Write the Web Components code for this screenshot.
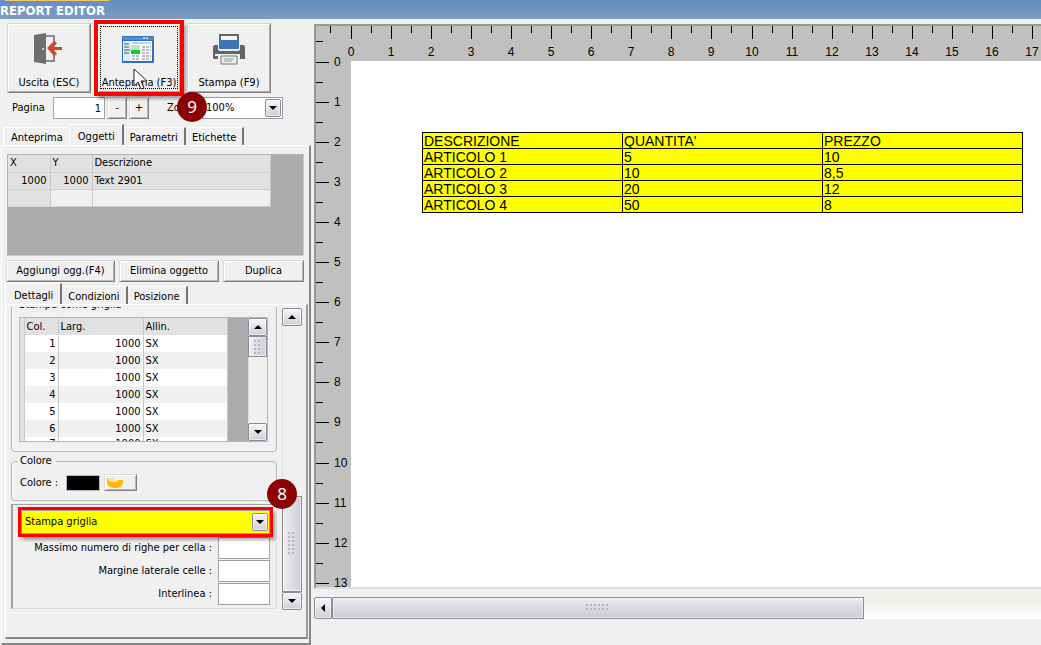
<!DOCTYPE html>
<html lang="it">
<head>
<meta charset="utf-8">
<title>Report editor</title>
<style>
  html, body { height: 100%; margin: 0; }
  body {
    background: #f0f0f0; color: #000; overflow: hidden;
    font: 11px/14px "DejaVu Sans Condensed", "DejaVu Sans", sans-serif;
  }
</style>
</head>
<body>
<report-editor></report-editor>
<script>
const reset = `
  *, *::before, *::after { box-sizing: border-box; }
  button, input, select { font: inherit; color: inherit; margin: 0; border-radius: 0; }
`;

function define(name, css, html, setup) {
  const template = document.createElement('template');
  template.innerHTML = `<style>${reset}${css}</style>${html}`;
  customElements.define(name, class extends HTMLElement {
    constructor() {
      super();
      this.attachShadow({ mode: 'open' }).append(template.content.cloneNode(true));
    }
    connectedCallback() { if (setup) setup(this, this.shadowRoot); }
  });
}

/* ---------- basic controls ---------- */

define('tool-button', `
  :host { display: block; position: relative; width: 84px; height: 70px; }
  button {
    width: 100%; height: 100%; padding: 8px 0 0; background: #f0f0f0;
    border: 1px solid; border-color: #d4d4d4 #808080 #808080 #d4d4d4;
    box-shadow: inset 1px 1px #fff, inset -1px -1px #a8a8a8;
    display: flex; flex-direction: column; align-items: center; gap: 10px;
    white-space: nowrap;
  }
  ::slotted(svg) { width: 36px; height: 34px; display: block; }
  :host([highlighted]) { outline: 4px solid #f00; outline-offset: -1px; box-shadow: 3px 4px 3px 2px #0005; }
  :host([highlighted]) button::after {
    content: ""; position: absolute; inset: 3px 3px 4px; border: 1px dotted #000;
  }
`, `<button type="button"><slot name="icon"></slot><span><slot></slot></span></button>`);

define('push-button', `
  :host { display: block; height: 22px; }
  button {
    width: 100%; height: 100%; padding: 0; background: #f0f0f0; white-space: nowrap;
    border: 1px solid; border-color: #dcdcdc #808080 #808080 #dcdcdc;
    box-shadow: inset 1px 1px #fff, inset -1px -1px #b8b8b8;
    display: flex; align-items: center; justify-content: center;
  }
`, `<button type="button"><slot></slot></button>`);

define('tab-item', `
  :host { display: block; }
  button {
    height: 18px; padding: 2px 6px 0 6px; background: #f0f0f0; border: 0;
    border-top: 1px solid #fff; border-right: 2px solid #777;
    display: block; white-space: nowrap;
  }
  :host([first]) button { padding-left: 7px; border-left: 1px solid #fff; border-right: 0; }
  :host([selected]) button { height: 21px; padding: 3px 7px 0 8px; border-left: 1px solid #fff; }
`, `<button type="button" role="tab"><slot></slot></button>`);

define('arrow-cap', `
  :host {
    display: flex; align-items: center; justify-content: center;
    width: 18px; height: 18px; border: 1px solid #8c8c94; border-radius: 2px;
    background: linear-gradient(#f6f6fa, #cfcfd8);
    box-shadow: inset 0 0 0 1px #ffffff90;
  }
  i { border: 4px solid transparent; border-bottom-width: 0; border-top: 4px solid #000; }
  :host([dir=up]) i { transform: rotate(180deg); }
  :host([dir=left]) i { transform: rotate(90deg); }
`, `<i></i>`);

define('combo-box', `
  :host { display: grid; height: 22px; }
  select, arrow-cap { grid-area: 1 / 1; }
  select {
    appearance: none; width: 100%; height: 100%; padding: 0 20px 0 3px;
    border: 1px solid #9a9aa2; background: var(--field, #fff); outline: 0;
  }
  arrow-cap { width: 16px; height: 18px; justify-self: end; align-self: center; margin-right: 2px; pointer-events: none; }
`, `<select><option></option></select><arrow-cap></arrow-cap>`, (host, root) => {
  root.querySelector('option').textContent = host.getAttribute('value');
  root.querySelector('select').setAttribute('aria-label', host.getAttribute('label'));
});

define('step-badge', `
  :host {
    position: absolute; display: flex; align-items: center; justify-content: center;
    width: 30px; height: 30px; border-radius: 50%; background: #8b0000; color: #fff;
    font: 17px/20px "Noto Sans", sans-serif; z-index: 3;
  }
`, `<slot></slot>`);

define('scroll-bar', `
  :host { display: flex; flex-direction: column; width: 20px; background: #f0f0ee; box-shadow: inset 1px 0 #dedee2; }
  :host([horizontal]) { flex-direction: row; width: auto; height: 22px; background: linear-gradient(#efede5, #fff); box-shadow: none; }
  arrow-cap { flex: none; width: 100%; height: 18px; }
  :host([horizontal]) arrow-cap { width: 18px; height: 100%; }
  .before { flex: var(--before, 0) 0 0; }
  .thumb {
    flex: var(--size, 1) 0 0; display: flex; align-items: center; justify-content: center;
    border: 1px solid #8c8c94; background: linear-gradient(90deg, #eeeef4, #cdcdd6);
    box-shadow: inset 0 0 0 1px #ffffff80;
  }
  :host([horizontal]) .thumb { background: linear-gradient(#ececf4, #dcdce4 40%, #ccccd4); }
  .after { flex: var(--after, 0) 0 0; }
  .grip {
    width: 8px; height: 24px; flex: none;
    background: radial-gradient(circle at 1px 1px, #b4b4bc 1px, transparent 1px) 0 0 / 4px 4px;
  }
  :host([horizontal]) .grip { width: 24px; height: 8px; }
  :host([short]) .grip { height: 14px; }
  :host([horizontal]) arrow-cap[dir=down] { display: none; }
`, `<arrow-cap dir="up"></arrow-cap><span class="before"></span><span class="thumb"><span class="grip"></span></span><span class="after"></span><arrow-cap dir="down"></arrow-cap>`,
(host, root) => {
  if (host.hasAttribute('horizontal')) root.querySelector('arrow-cap').setAttribute('dir', 'left');
});

/* ---------- tool area ---------- */

define('main-toolbar', `
  :host { display: block; padding: 4px 7px 0; position: relative; }
  .tools { display: flex; gap: 6px; }
  .pointer { position: absolute; left: 133px; top: 49px; width: 16px; height: 24px; z-index: 2; }
  .fields { display: flex; align-items: center; height: 22px; margin-top: 4px; padding-left: 5px; }
  label { white-space: nowrap; }
  .page { width: 41px; }
  input { width: 52px; height: 22px; border: 1px solid #a0a0a8; background: #fff; text-align: right; padding: 0 3px; outline: 0; }
  push-button { width: 20px; margin-left: 2px; }
  .zoom { margin-left: 18px; width: 35px; }
  combo-box { width: 81px; }
  step-badge { left: 177px; top: 73px; }
`, `
  <div class="tools">
    <tool-button>
      <svg slot="icon" viewBox="0 0 36 34" aria-hidden="true">
        <path d="M14 3h10v9h-2V5h-8zM22 22h2v8H14v-2h8z" fill="#8a8a8a"/>
        <path d="M3 3l12-2v31L3 30z" fill="#6e6e6e"/><circle cx="12" cy="17" r="1" fill="#eee"/>
        <path d="M31 15v3h-8l3 4-3 2-7-8 7-7 3 2-3 4z" fill="#d2452f"/>
      </svg>Uscita (ESC)
    </tool-button>
    <tool-button highlighted>
      <svg slot="icon" viewBox="0 0 36 34" aria-hidden="true">
        <rect x="1" y="4" width="32" height="27" rx="1" fill="#2d6fc0"/>
        <rect x="2" y="5" width="30" height="3" fill="#4b90e0"/>
        <path d="M22 5h2v2h-2zM25 5h2v2h-2z" fill="#b5d4f8"/><path d="M28 5h3v2h-3z" fill="#e0533a"/>
        <rect x="2" y="9" width="8" height="20" fill="#e4ecf8"/><rect x="10" y="9" width="21" height="20" fill="#fff"/>
        <path d="M3 12h5M3 15h5M3 18h6M3 21h5" stroke="#456" />
        <path d="M11 11h19" stroke="#c3d2ea" stroke-width="2"/>
        <rect x="10" y="13" width="9" height="9" fill="#16c92c"/><rect x="10" y="13" width="9" height="5" fill="#b4ecc0"/>
        <path d="M21 15h9M21 18h9M21 21h8M11 24h8M21 24h9M11 27h7M21 27h8" stroke="#778" stroke-dasharray="3 1"/>
      </svg>Anteprima (F3)
    </tool-button>
    <tool-button>
      <svg slot="icon" viewBox="0 0 36 34" aria-hidden="true">
        <rect x="9" y="3" width="18" height="10" fill="#f4f4f4" stroke="#666" stroke-width="2"/>
        <path d="M4 13h28q2 0 2 2v12h-5v-5H7v5H3q-1 0-1-1V15q0-2 2-2z" fill="#636466"/>
        <path d="M7 9h22v8q0 2-2 2H9q-2 0-2-2z" fill="#f0f0f0"/>
        <path d="M8 8h20v8q0 1-1 1H9q-1 0-1-1z" fill="#3c74b4"/>
        <path d="M10 24h16v8H10z" fill="#ececec" stroke="#777"/>
        <path d="M13 27h10M13 29h8" stroke="#999"/><rect x="4" y="22" width="3" height="2" fill="#eee"/>
      </svg>Stampa (F9)
    </tool-button>
  </div>
  <svg class="pointer" viewBox="0 0 16 24" aria-hidden="true">
    <path d="M1 1v17l4-4 3 7 3-1-3-7h6z" fill="#fff" stroke="#222"/>
  </svg>
  <div class="fields">
    <label class="page" for="page">Pagina</label><input id="page" value="1">
    <push-button>-</push-button><push-button>+</push-button>
    <span class="zoom">Zoom</span><combo-box value="100%" label="Zoom"></combo-box>
  </div>
  <step-badge>9</step-badge>
`);

define('object-grid', `
  :host { display: block; height: 102px; background: #ababab; border: 1px solid #c8c8d0; border-top-color: #b4b4b4; border-left-color: #b4b4b4; }
  table { border-collapse: collapse; table-layout: fixed; width: 263px; }
  th, td { height: 17px; padding: 0 2px; font-weight: normal; text-align: left; border-right: 1px solid #c8c8cc; border-bottom: 1px solid #d0d0d4; background: #e1e1e1; }
  th { border-bottom-color: #cfcfd6; }
  td.n { text-align: right; padding-right: 3px; }
  .empty td + td { background: #f0f0f0; }
`, `<table>
  <colgroup><col style="width:42px"><col style="width:42px"><col></colgroup>
  <thead><tr><th>X</th><th>Y</th><th>Descrizione</th></tr></thead>
  <tbody><tr><td class="n">1000</td><td class="n">1000</td><td>Text 2901</td></tr>
  <tr class="empty"><td></td><td></td><td></td></tr></tbody></table>`);

define('column-grid', `
  :host { display: flex; height: 125px; background: #ababab; border: 1px solid #b4b4bc; overflow: hidden; }
  .view { flex: 1; overflow: hidden; }
  table { border-collapse: collapse; table-layout: fixed; width: 208px; }
  th, td { height: 17px; padding: 0 2px; font-weight: normal; text-align: left; border-right: 1px solid #c8c8cc; background: #fff; }
  th { background: #e1e1e1; }
  tr:nth-child(even) td { background: #f0f0f0; }
  tr:last-child td { vertical-align: top; }
  td:first-child, th:first-child, tr:nth-child(even) td:first-child { padding: 0; background: #e1e1e1; }
  .n { text-align: right; }
  scroll-bar { width: 19px; --size: 20; --after: 68; }
`, `<div class="view"><table>
  <colgroup><col style="width:4px"><col style="width:34px"><col style="width:85px"><col></colgroup>
  <thead><tr><th></th><th>Col.</th><th>Larg.</th><th>Allin.</th></tr></thead><tbody></tbody></table></div>
  <scroll-bar short></scroll-bar>`, (host, root) => {
  root.querySelector('tbody').innerHTML = [1, 2, 3, 4, 5, 6, 7].map(n =>
    `<tr><td></td><td class="n">${n}</td><td class="n">1000</td><td>SX</td></tr>`).join('');
});

define('detail-form', `
  :host { display: flex; flex: 1; position: relative; padding: 2px 4px 27px 5px; }
  .view { width: 266px; overflow: hidden; }
  .content { margin-top: -9px; }
  fieldset { margin: 0; border: 1px solid #b4b4b4; border-radius: 4px; min-width: 0; box-shadow: inset 1px 0 #fff, inset 0 -1px #fff; }
  legend { padding: 0 4px 0 2px; margin-left: -2px; height: 14px; }
  .grid { padding: 5px 8px 9px 7px; }
  .colour { margin-top: 2px; padding: 6px 8px 9px; display: flex; }
  .line { display: flex; align-items: center; }
  .swatch { width: 34px; height: 16px; background: #000; border: 1px solid #b8b8c8; margin: 0 4px 0 8px; padding: 0; }
  push-button { width: 33px; height: 17px; }
  .folder { width: 20px; height: 13px; margin-right: 10px; }
  .options { margin-top: 3px; padding: 5px 6px 3px 8px; border: 1px solid #dcdcdc; border-left: 2px solid #a0a0a0; border-top-color: #a0a0a0; }
  combo-box { height: 24px; --field: #ff0; outline: 3px solid #f00; box-shadow: 3px 4px 3px 2px #0005; position: relative; z-index: 1; }
  .field { display: flex; align-items: center; justify-content: flex-end; gap: 6px; height: 22px; margin-top: 1px; }
  .first { margin-top: 3px; }
  input { width: 52px; height: 22px; border: 1px solid #a0a0a8; background: #fff; outline: 0; }
  .outer { width: 20px; margin: 1px 0 0 5px; --before: 171; --size: 94; }
  step-badge { left: 261px; top: 174px; }
`, `
  <div class="view"><div class="content">
    <fieldset class="grid"><legend>Stampa come griglia</legend><column-grid></column-grid></fieldset>
    <fieldset class="colour"><legend>Colore</legend>
      <div class="line"><span id="c">Colore :</span><button class="swatch" type="button" aria-labelledby="c"></button>
      <push-button><svg class="folder" viewBox="0 0 20 13" aria-hidden="true"><path d="M1 2h5l2 2h9v3l-2 4q-6 2-11 0L1 8z" fill="#fdb90a"/><path d="M2 2h4l2 2h4q0 2-3 2Q5 7 2 4z" fill="#ffe4a0"/></svg></push-button></div>
    </fieldset>
    <div class="options">
      <combo-box value="Stampa griglia" label="Modalità di stampa"></combo-box>
      <div class="field first"><label for="rows">Massimo numero di righe per cella :</label><input id="rows"></div>
      <div class="field"><label for="margin">Margine laterale celle :</label><input id="margin"></div>
      <div class="field"><label for="spacing">Interlinea :</label><input id="spacing"></div>
    </div>
  </div></div>
  <scroll-bar class="outer"></scroll-bar>
  <step-badge>8</step-badge>
`);

define('side-panel', `
  :host { display: flex; flex-direction: column; width: 311px; flex: none; }
  .tabs { display: flex; align-items: flex-end; height: 21px; margin-top: 5px; padding-left: 3px; }
  .page { flex: 1; display: flex; flex-direction: column; margin-left: 1px; padding: 8px 0 4px;
    border: 1px solid #fff; border-right: 2px solid #868686; border-bottom: 2px solid #868686; }
  object-grid { margin: 0 5px; }
  .actions { display: grid; grid-template-columns: 109px 100px 1fr; gap: 4px; margin: 4px 5px 0 4px; }
  .inner { height: 20px; margin-top: 2px; }
  .details { flex: 1; display: flex; margin: 0 1px 0 3px; border: 1px solid #fff; border-right: 2px solid #999; border-bottom: 2px solid #868686; }
`, `
  <main-toolbar></main-toolbar>
  <div class="tabs" role="tablist"><tab-item first>Anteprima</tab-item><tab-item selected>Oggetti</tab-item><tab-item>Parametri</tab-item><tab-item>Etichette</tab-item></div>
  <div class="page">
    <object-grid></object-grid>
    <div class="actions"><push-button>Aggiungi ogg.(F4)</push-button><push-button>Elimina oggetto</push-button><push-button>Duplica</push-button></div>
    <div class="tabs inner" role="tablist"><tab-item selected>Dettagli</tab-item><tab-item>Condizioni</tab-item><tab-item>Posizione</tab-item></div>
    <div class="details"><detail-form></detail-form></div>
  </div>
`);

/* ---------- drawing area ---------- */

const CM = 40.1;

define('cm-ruler', `
  :host { display: block; overflow: hidden; background: #c0c0c0; }
  svg { display: block; width: 100%; height: 100%; }
  text { font: 12px "Liberation Sans", Arial, sans-serif; }
`, `<svg></svg>`, (host, root) => {
  const vertical = host.hasAttribute('vertical');
  const origin = vertical ? 36 : 35;
  const draw = () => {
    const length = vertical ? host.clientHeight : host.clientWidth;
    let out = '';
    for (let half = -1; origin + half * CM / 2 < length; half++) {
      const at = origin + Math.floor(half * CM / 2);
      const whole = half % 2 === 0;
      const size = whole ? 13 : 7;
      out += vertical
        ? `<rect x="0" y="${at}" width="${size}" height="1"/>`
        : `<rect x="${at}" y="0" width="1" height="${size}"/>`;
      if (whole && at + 4 <= length) out += vertical
        ? `<text x="18" y="${at + 4}">${half / 2}</text>`
        : `<text x="${at}" y="30" text-anchor="middle">${half / 2}</text>`;
    }
    root.querySelector('svg').innerHTML = out;
  };
  draw();
  new ResizeObserver(draw).observe(host);
});

define('price-table', `
  :host { display: block; }
  table { width: 601px; border-collapse: collapse; table-layout: fixed; background: #ff0; font: 14px/14px "Liberation Sans", Arial, sans-serif; }
  th, td { height: 16px; padding: 1px 0 0 1px; border: 1px solid #000; text-align: left; font-weight: normal; }
`, `<table>
  <thead><tr><th>DESCRIZIONE</th><th>QUANTITA'</th><th>PREZZO</th></tr></thead>
  <tbody>
    <tr><td>ARTICOLO 1</td><td>5</td><td>10</td></tr>
    <tr><td>ARTICOLO 2</td><td>10</td><td>8,5</td></tr>
    <tr><td>ARTICOLO 3</td><td>20</td><td>12</td></tr>
    <tr><td>ARTICOLO 4</td><td>50</td><td>8</td></tr>
  </tbody></table>`);

define('report-canvas', `
  :host { display: flex; flex-direction: column; flex: 1; min-width: 0; margin-left: 3px; padding: 5px 0 26px; }
  .area {
    flex: 1; min-height: 0; display: grid; grid-template: 35px 1fr / 35px 1fr; overflow: hidden; background: #c0c0c0;
    border: 2px solid #989898; border-right: 0; border-bottom-color: #dcdce4;
  }
  .top { grid-area: 1 / 1 / 2 / 3; }
  .left { grid-area: 1 / 1 / 3 / 2; background: none; }
  .sheet { grid-area: 2 / 2; background: #fff; padding: 71px; overflow: hidden; }
  scroll-bar { margin-top: 8px; --size: 75; --after: 25; }
`, `
  <div class="area">
    <cm-ruler class="top"></cm-ruler><cm-ruler class="left" vertical></cm-ruler>
    <div class="sheet"><price-table></price-table></div>
  </div>
  <scroll-bar horizontal></scroll-bar>
`);

define('title-bar', `
  :host { display: block; height: 19px; flex: none; background: linear-gradient(#5f8fcf, #6b8fbd 3px, #7b9dc4); color: #fff; }
  .strip { width: 104px; height: 1px; margin-left: 5px; background: #f0c869; }
  h1 { margin: 0; font: bold 13px/20px "DejaVu Sans Condensed", "DejaVu Sans", sans-serif; }
`, `<div class="strip"></div><h1>REPORT EDITOR</h1>`);

define('report-editor', `
  :host { display: flex; flex-direction: column; height: 100vh; }
  .body { flex: 1; min-height: 0; display: flex; }
`, `<title-bar></title-bar><div class="body"><side-panel></side-panel><report-canvas></report-canvas></div>`);
</script>
</body>
</html>
